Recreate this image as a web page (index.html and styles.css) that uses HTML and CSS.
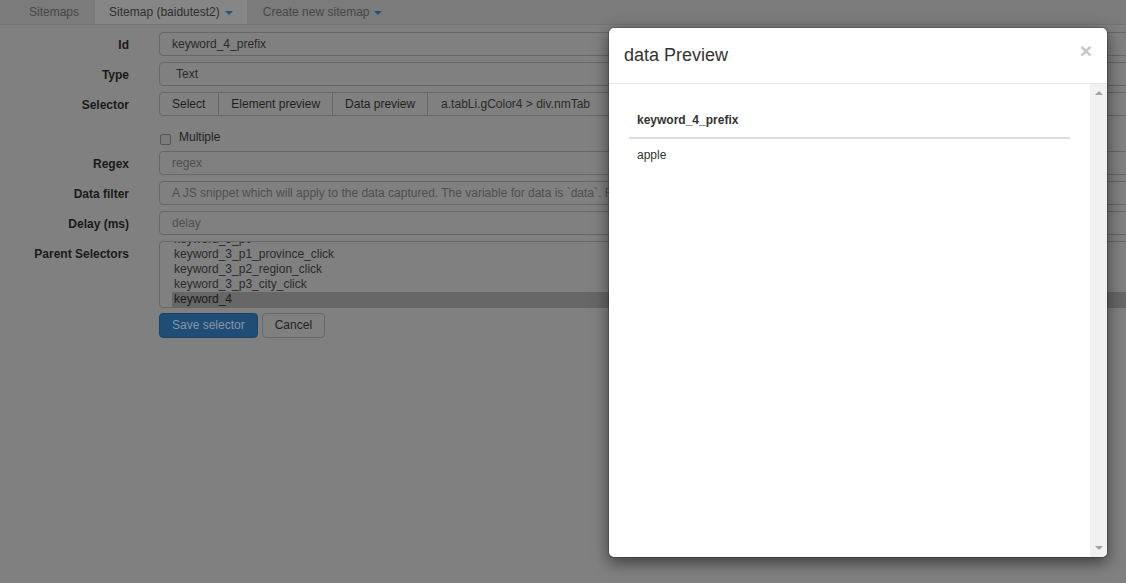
FILE: index.html
```html
<!DOCTYPE html>
<html>
<head>
<meta charset="utf-8">
<link rel="stylesheet" href="styles.css">
</head>
<body>
<nav class="tabs">
  <a class="tab">Sitemaps</a>
  <a class="tab active">Sitemap (baidutest2) <span class="caret"></span></a>
  <a class="tab">Create new sitemap <span class="caret"></span></a>
</nav>
<div class="form">
  <div class="row">
    <div class="lbl">Id</div>
    <div class="ctl"><div class="input">keyword_4_prefix</div></div>
  </div>
  <div class="row">
    <div class="lbl">Type</div>
    <div class="ctl"><div class="input select">Text</div></div>
  </div>
  <div class="row">
    <div class="lbl">Selector</div>
    <div class="ctl group">
      <div class="gbtn first">Select</div>
      <div class="gbtn">Element preview</div>
      <div class="gbtn">Data preview</div>
      <div class="input last">a.tabLi.gColor4 &gt; div.nmTab</div>
    </div>
  </div>
  <div class="row check-row">
    <div class="lbl"></div>
    <div class="ctl check"><span class="box"></span><span>Multiple</span></div>
  </div>
  <div class="row">
    <div class="lbl">Regex</div>
    <div class="ctl"><div class="input ph">regex</div></div>
  </div>
  <div class="row">
    <div class="lbl">Data filter</div>
    <div class="ctl"><div class="input ph">A JS snippet which will apply to the data captured. The variable for data is `data`. Function must return the modified data.</div></div>
  </div>
  <div class="row">
    <div class="lbl">Delay (ms)</div>
    <div class="ctl"><div class="input ph">delay</div></div>
  </div>
  <div class="row">
    <div class="lbl">Parent Selectors</div>
    <div class="ctl">
      <div class="listbox">
        <div class="opt">keyword_3_p0</div>
        <div class="opt">keyword_3_p1_province_click</div>
        <div class="opt">keyword_3_p2_region_click</div>
        <div class="opt">keyword_3_p3_city_click</div>
        <div class="opt sel">keyword_4</div>
      </div>
    </div>
  </div>
  <div class="row btn-row">
    <div class="lbl"></div>
    <div class="ctl buttons">
      <div class="btn primary">Save selector</div>
      <div class="btn">Cancel</div>
    </div>
  </div>
</div>

<div class="modal">
  <div class="modal-header">
    <span class="close">&times;</span>
    <h4 class="title">data Preview</h4>
  </div>
  <div class="modal-main">
    <div class="modal-body">
      <table class="table">
        <thead><tr><th>keyword_4_prefix</th></tr></thead>
        <tbody><tr><td>apple</td></tr></tbody>
      </table>
    </div>
    <div class="scrollbar">
      <span class="arrow up"></span>
      <span class="arrow down"></span>
    </div>
  </div>
</div>
</body>
</html>
```
FILE: styles.css
```css
* { box-sizing: border-box; }
html, body { margin: 0; padding: 0; }
body {
  width: 1126px;
  height: 583px;
  overflow: hidden;
  background: #808080;
  font-family: "Liberation Sans", Arial, sans-serif;
  font-size: 12px;
  line-height: 17px;
  color: #1a1a1a;
  position: relative;
}

.tabs {
  display: flex;
  height: 25px;
  padding-left: 15px;
  background: #7b7b7b;
  border-bottom: 1px solid #747474;
}
.tab {
  display: flex;
  align-items: center;
  padding: 0 14px;
  margin-right: 2px;
  height: 24px;
  color: #474747;
}
.tab.active { background: #868686; color: #2e2e2e; }
.caret {
  display: inline-block;
  width: 0; height: 0;
  margin-left: 5px;
  margin-top: 2px;
  border-top: 4px solid #1f5585;
  border-left: 4px solid transparent;
  border-right: 4px solid transparent;
}

.form {
  display: flex;
  flex-direction: column;
  gap: 6px;
  padding-top: 7px;
}
.row { display: flex; gap: 30px; }
.lbl {
  width: 129px;
  flex: none;
  text-align: right;
  font-weight: bold;
  padding-top: 5px;
  color: #1a1a1a;
}
.ctl { width: 1000px; flex: none; }

.input {
  height: 24px;
  border: 1px solid #676767;
  border-radius: 4px;
  padding: 0 12px;
  display: flex;
  align-items: center;
  color: #2b2b2b;
  white-space: nowrap;
  overflow: hidden;
}
.input.select { padding-left: 16px; }
.input.ph { color: #4f4f4f; }

.group { display: flex; }
.gbtn {
  height: 24px;
  border: 1px solid #676767;
  border-left: 0;
  padding: 0 12px;
  display: flex;
  align-items: center;
  color: #1f1f1f;
}
.gbtn.first { border-left: 1px solid #676767; border-radius: 4px 0 0 4px; padding-right: 13px; }
.input.last { flex: 1; border-radius: 0 4px 4px 0; border-left: 0; padding-left: 13px; }

.check-row { height: 23px; }
.check {
  display: flex;
  align-items: flex-end;
  gap: 8px;
  padding-left: 1px;
}
.box {
  width: 11px; height: 11px;
  border: 1px solid #555;
  border-radius: 2px;
  background: #7c7c7c;
  margin-bottom: 0;
}
.check span:last-child { line-height: 17px; margin-bottom: -1px; color: #1f1f1f; }

.listbox {
  height: 67px;
  border: 1px solid #676767;
  border-radius: 4px;
  padding: 0 0 0 12px;
  display: flex;
  flex-direction: column;
  justify-content: flex-end;
  overflow: hidden;
}
.opt {
  flex: none;
  height: 15px;
  line-height: 15px;
  padding-left: 2px;
  color: #2b2b2b;
  white-space: nowrap;
}
.opt.sel { background: #676767; color: #1a1a1a; }

.btn-row { margin-top: -1px; }
.buttons { display: flex; gap: 4px; }
.btn {
  height: 25px;
  padding: 0 12px;
  border: 1px solid #676767;
  border-radius: 4px;
  display: flex;
  align-items: center;
  color: #1f1f1f;
}
.btn.primary {
  background: #1f4d76;
  border-color: #1b4468;
  color: #8796a6;
}

.modal {
  position: absolute;
  left: 608px;
  top: 27px;
  width: 500px;
  height: 531px;
  background: #fff;
  border: 1px solid rgba(0,0,0,0.2);
  border-radius: 6px;
  box-shadow: 0 5px 15px rgba(0,0,0,0.5);
  display: flex;
  flex-direction: column;
  overflow: hidden;
  background-clip: padding-box;
}
.modal-header {
  padding: 15px 15px 16px 15px;
  border-bottom: 1px solid #e5e5e5;
  flex: none;
}
.title {
  margin: 0;
  font-size: 18px;
  line-height: 24px;
  font-weight: normal;
  color: #333;
}
.close {
  float: right;
  font-size: 21px;
  font-weight: bold;
  line-height: 24px;
  color: #c6c6c6;
  margin-top: -4px;
}
.modal-main { flex: 1; display: flex; min-height: 0; }
.modal-body { flex: 1; padding: 20px; }
.table { width: 100%; border-collapse: collapse; }
.table th, .table td {
  text-align: left;
  padding: 8px;
  line-height: 17px;
  color: #333;
}
.table th { border-bottom: 2px solid #ddd; font-weight: bold; }
.scrollbar {
  width: 17px;
  flex: none;
  background: #f1f1f1;
  display: flex;
  flex-direction: column;
  justify-content: space-between;
  align-items: center;
  padding: 7px 0 7px;
}
.arrow { width: 0; height: 0; border-left: 4px solid transparent; border-right: 4px solid transparent; }
.arrow.up { border-bottom: 4px solid #a3a3a3; }
.arrow.down { border-top: 4px solid #a3a3a3; }
```
